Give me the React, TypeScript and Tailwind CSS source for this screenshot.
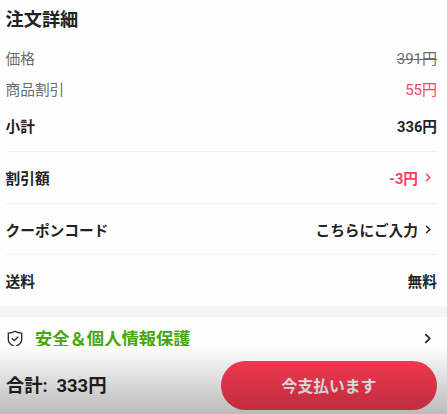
import type { ReactNode } from "react";

function Chevron({ className }: { className: string }) {
  return (
    <svg viewBox="0 0 6 10" fill="none" stroke="currentColor" strokeWidth="1.6" className={className}>
      <path d="M1 1l4 4-4 4" />
    </svg>
  );
}

function Row({ label, className, children }: { label: string; className: string; children: ReactNode }) {
  return (
    <div className={`flex items-center justify-between ${className}`}>
      <span>{label}</span>
      {children}
    </div>
  );
}

export default function App() {
  return (
    <div className="flex h-[414px] w-[447px] flex-col overflow-hidden bg-[#fefefe] font-['Roboto','Noto_Sans_CJK_JP',sans-serif] text-[14.7px] leading-5 text-[#222]">
      <section className="flex h-[306px] shrink-0 flex-col pr-[10px] pl-[5.5px]">
        <h2 className="flex h-[43px] items-center pb-[4px] text-[18.2px] font-bold">注文詳細</h2>
        <Row label="価格" className="h-[31px] text-[#6c6c6c]">
          <span className="text-[15px] line-through">391円</span>
        </Row>
        <Row label="商品割引" className="h-[32px] text-[#6c6c6c]">
          <span className="text-[15px] text-[#ee4862]">55円</span>
        </Row>
        <Row label="小計" className="h-[46px] border-b border-[#f2f2f2] pb-[3px] font-bold">
          <span>336円</span>
        </Row>
        <Row label="割引額" className="h-[52px] border-b border-[#f2f2f2] pt-[2px] font-bold">
          <span className="flex items-center gap-[7px] pr-[6px] text-[#f43e5a]">
            -3円
            <Chevron className="mb-[3px] h-[9px] w-[6px]" />
          </span>
        </Row>
        <Row label="クーポンコード" className="h-[51px] border-b border-[#f2f2f2] pt-[3px] font-bold">
          <span className="flex items-center gap-[7px] pr-[6px]">
            こちらにご入力
            <Chevron className="mb-[3px] h-[9px] w-[6px]" />
          </span>
        </Row>
        <Row label="送料" className="h-[51px] pt-[3px] font-bold">
          <span>無料</span>
        </Row>
      </section>
      <div className="h-[11px] shrink-0 bg-[#f5f5f5]" />
      <section className="h-[29px] shrink-0 overflow-hidden">
        <div className="flex h-[43px] items-center pr-[16px] pl-[7px]">
          <svg viewBox="0 0 16 18" fill="none" stroke="#222" strokeWidth="1.3" className="h-[18px] w-[16px]">
            <path d="M8 1.2c2 1.2 4.2 1.8 6.7 1.9v6.2c0 3.4-2.700 5.800-6.700 7.500-4-1.700-6.700-4.100-6.700-7.500V3.100C3.800 3 6 2.400 8 1.200z" />
            <path d="M4.800 8.300l2.400 2.400 4-4" />
          </svg>
          <span className="ml-[12px] flex-1 text-[17.3px] font-bold text-[#46a60b]">安全＆個人情報保護</span>
          <Chevron className="h-[11px] w-[7px] text-[#222]" />
        </div>
      </section>
      <footer className="relative flex h-[68px] shrink-0 items-center justify-between bg-white pt-[13px] pr-[10px] pb-[3px] pl-[6px]">
        <div className="flex gap-[9px] pt-[2px] text-[18.2px] font-bold">
          <span>合計:</span>
          <span className="text-[18.4px]">333円</span>
        </div>
        <button className="flex h-[49px] w-[216px] items-center justify-center rounded-full bg-[#ff3b53] pt-[3px] text-[15.8px] font-bold text-white">
          今支払います
        </button>
        <div className="pointer-events-none absolute inset-0 bg-linear-to-b from-black/0 to-black/27" />
      </footer>
    </div>
  );
}
